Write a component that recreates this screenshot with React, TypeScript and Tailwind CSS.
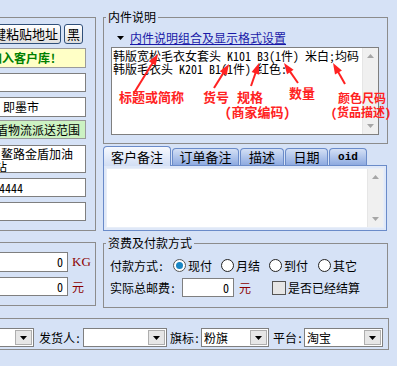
import React from "react";

const Tri = ({ color = "#000", up = false, w = 7, h = 4 }: { color?: string; up?: boolean; w?: number; h?: number }) => (
  <svg width={w} height={h} viewBox={`0 0 ${w} ${h}`} className="block">
    <polygon points={up ? `0,${h} ${w},${h} ${w / 2},0` : `0,0 ${w},0 ${w / 2},${h}`} fill={color} />
  </svg>
);

const VScroll = () => (
  <div className="w-[16px] h-full flex-none bg-[#f0f0f0] border-l border-[#e6e6e6] flex flex-col items-center justify-between py-[6px]">
    <Tri color="#a6a6a6" up />
    <Tri color="#a6a6a6" />
  </div>
);

const Combo = ({ text = "", cls }: { text?: string; cls: string }) => (
  <div className={`h-[19px] bg-white border border-[#7f7f7f] flex items-stretch ${cls}`}>
    <div className="flex-1 pl-[2px] leading-[17px] overflow-hidden whitespace-nowrap">{text}</div>
    <div className="w-[17px] m-[1px] bg-[#e6e6e6] border border-[#aeaeae] flex items-center justify-center">
      <Tri />
    </div>
  </div>
);

const Radio = ({ on = false }: { on?: boolean }) =>
  on ? (
    <div className="w-[13px] h-[13px] rounded-full border border-[#555] bg-white flex items-center justify-center">
      <div className="w-[7px] h-[7px] rounded-full bg-[#1a86c4]" />
    </div>
  ) : (
    <div className="w-[13px] h-[13px] rounded-full border border-[#222] bg-white" />
  );

const arrows: [number, number, number, number][] = [
  [22, 45, 46, 6],
  [102, 40, 117, 16],
  [139, 38, 147, 15],
  [186, 35, 172, 15],
  [233, 36, 221, 15],
];

const Arrow = ({ a }: { a: [number, number, number, number] }) => {
  const [x1, y1, x2, y2] = a;
  const dx = x2 - x1;
  const dy = y2 - y1;
  const L = Math.hypot(dx, dy);
  const ux = dx / L;
  const uy = dy / L;
  const bx = x2 - ux * 11;
  const by = y2 - uy * 11;
  const nx = -uy;
  const ny = ux;
  return (
    <g>
      <line x1={x1} y1={y1} x2={bx + ux * 2} y2={by + uy * 2} stroke="#f22" strokeWidth={2} />
      <polygon points={`${x2},${y2} ${bx + nx * 4},${by + ny * 4} ${bx - nx * 4},${by - ny * 4}`} fill="#f22" />
    </g>
  );
};

export default function App() {
  return (
    <div className="w-[397px] h-[366px] overflow-hidden bg-[#d6e2f6] text-[12px] leading-[14px] text-black [font-family:'Noto_Sans_Mono_CJK_SC','Noto_Sans_CJK_SC',sans-serif] flex flex-col">
      <div className="flex h-[308px] flex-none">
        {/* Left column */}
        <div className="w-[96px] flex-none flex flex-col pt-[17px]">
          <div className="h-[214px] border-t border-r border-b border-[#8c8c8c] pt-[6px]">
            <div className="ml-[-30px] w-[116px] flex flex-col">
              <div className="h-[20px] flex gap-[3px] pr-[3px]">
                <div className="flex-1 rounded-[3px] border border-[#30507a] bg-linear-to-b from-white to-[#e0e0e0] text-[13px] leading-[18px] text-right pr-[2px] whitespace-nowrap overflow-hidden">
                  一键粘贴地址
                </div>
                <div className="w-[19px] rounded-[3px] border border-[#30507a] bg-linear-to-b from-white to-[#e0e0e0] text-[13px] leading-[18px] text-center">
                  黑
                </div>
              </div>
              <div className="mt-[4px] h-[20px] bg-[#ffffc6] border border-[#9a9a9a] pl-[19px] leading-[18px] text-[#008000] font-bold whitespace-nowrap">
                加入客户库!
              </div>
              <div className="mt-[5px] h-[19px] bg-white border border-[#7f7f7f]" />
              <div className="mt-[5px] h-[20px] bg-white border border-[#7f7f7f] pl-[32px] leading-[18px]">即墨市</div>
              <div className="mt-[3px] h-[19px] bg-[#ccf2c2] border border-[#9a9a9a] pl-[13px] leading-[17px] whitespace-nowrap overflow-hidden">
                金盾物流派送范围
              </div>
              <div className="mt-[6px] h-[28px] bg-white border border-[#7f7f7f] leading-[13px] pt-[1px] overflow-hidden">
                <div className="pl-[30px] whitespace-nowrap">鳌路金盾加油</div>
                <div className="pl-[24px]">站</div>
              </div>
              <div className="mt-[5px] h-[19px] bg-white border border-[#7f7f7f] pl-[28px] leading-[17px]">4444</div>
              <div className="mt-[5px] h-[19px] bg-white border border-[#7f7f7f]" />
            </div>
          </div>
          <div className="mt-[11px] h-[64px] border-t border-r border-b border-[#8c8c8c] pt-[9px]">
            <div className="flex items-center h-[20px]">
              <div className="ml-[-30px] w-[98px] h-[20px] bg-white border border-[#7f7f7f] text-right pr-[4px] leading-[18px]">0</div>
              <span className="ml-[4px] text-[#8b0000] [font-family:'Liberation_Serif',serif] text-[13px]">KG</span>
            </div>
            <div className="flex items-center h-[19px] mt-[5px]">
              <div className="ml-[-30px] w-[98px] h-[19px] bg-white border border-[#7f7f7f] text-right pr-[4px] leading-[17px]">0</div>
              <span className="ml-[4px] text-[#8b0000]">元</span>
            </div>
          </div>
        </div>

        {/* Right column */}
        <div className="ml-[7px] w-[285px] flex-none flex flex-col pt-[10px]">
          <fieldset className="h-[134px] border border-[#8c8c8c] flex-none">
            <legend className="ml-[2px] px-[2px] leading-[14px]">内件说明</legend>
            <div className="mt-[6px] h-[15px] flex items-center pl-[13px]">
              <Tri w={7} h={4} />
              <span className="ml-[6px] text-[#1a1aa8] underline leading-[15px]">内件说明组合及显示格式设置</span>
            </div>
            <div className="relative mt-[2px] ml-[7px] w-[268px] h-[88px] bg-white border border-[#7f7f7f] flex">
              <div className="flex-1 pl-[1px] pt-[1px] leading-[13px] whitespace-nowrap overflow-hidden">
                <div>韩版宽松毛衣女套头 K101 B3(1件) 米白;均码</div>
                <div>韩版毛衣头 K201 B1(1件) 红色:</div>
              </div>
              <VScroll />
              <div className="absolute left-0 top-0 w-[268px] h-[88px] pointer-events-none">
                <svg width="280" height="90" className="absolute left-0 top-0 overflow-visible">
                  {arrows.map((a, i) => (
                    <Arrow key={i} a={a} />
                  ))}
                </svg>
                <div className="absolute left-[7px] top-[41px] text-[13px] leading-[15px] font-bold text-[#f22] whitespace-nowrap">标题或简称</div>
                <div className="absolute left-[91px] top-[41px] text-[13px] leading-[15px] font-bold text-[#f22]">货号</div>
                <div className="absolute left-[125px] top-[41px] text-[13px] leading-[15px] font-bold text-[#f22]">规格</div>
                <div className="absolute left-[113px] top-[56px] text-[13px] leading-[15px] font-bold text-[#f22] whitespace-nowrap">(商家编码)</div>
                <div className="absolute left-[177px] top-[37px] text-[13px] leading-[15px] font-bold text-[#f22]">数量</div>
                <div className="absolute left-[226px] top-[42px] text-[12px] leading-[15px] font-bold text-[#f22] whitespace-nowrap">颜色尺码</div>
                <div className="absolute left-[219px] top-[56px] text-[12px] leading-[15px] font-bold text-[#f22] whitespace-nowrap">(货品描述)</div>
              </div>
            </div>
          </fieldset>

          <div className="mt-[2px] h-[19px] flex items-end gap-[1px] relative z-10">
            <div className="w-[68px] h-[20px] -mb-[1px] rounded-t-[4px] border border-b-0 border-[#6a8bc9] bg-linear-to-b from-[#f6f9fe] to-[#d2def4] text-center leading-[19px] text-[13px]">客户备注</div>
            <div className="w-[67px] h-[17px] rounded-t-[4px] border border-b-0 border-[#6a8bc9] bg-linear-to-b from-[#d4e0f5] to-[#8eaae0] text-center leading-[16px] text-[13px]">订单备注</div>
            <div className="w-[44px] h-[17px] rounded-t-[4px] border border-b-0 border-[#6a8bc9] bg-linear-to-b from-[#d4e0f5] to-[#8eaae0] text-center leading-[16px] text-[13px]">描述</div>
            <div className="w-[43px] h-[17px] rounded-t-[4px] border border-b-0 border-[#6a8bc9] bg-linear-to-b from-[#d4e0f5] to-[#8eaae0] text-center leading-[16px] text-[13px]">日期</div>
            <div className="w-[38px] h-[17px] rounded-t-[4px] border border-b-0 border-[#6a8bc9] bg-linear-to-b from-[#d4e0f5] to-[#8eaae0] text-center leading-[16px] [font-family:'Liberation_Mono',monospace] font-bold text-[11px]">oid</div>
          </div>
          <div className="w-[284px] h-[66px] border border-[#6a8bc9] bg-[#dfe8f8] p-[2px] flex-none">
            <div className="w-full h-full bg-white flex justify-end border border-[#e8eef8]">
              <VScroll />
            </div>
          </div>

          <fieldset className="mt-[5px] h-[72px] border border-[#8c8c8c] flex-none">
            <legend className="ml-[2px] px-[2px] leading-[14px]">资费及付款方式</legend>
            <div className="mt-[6px] h-[19px] flex items-center pl-[6px] whitespace-nowrap">
              <span>付款方式:</span>
              <span className="ml-[9px]"><Radio on /></span>
              <span className="ml-[2px]">现付</span>
              <span className="ml-[9px]"><Radio /></span>
              <span className="ml-[2px]">月结</span>
              <span className="ml-[9px]"><Radio /></span>
              <span className="ml-[2px]">到付</span>
              <span className="ml-[10px]"><Radio /></span>
              <span className="ml-[2px]">其它</span>
            </div>
            <div className="mt-[3px] h-[19px] flex items-center pl-[6px] whitespace-nowrap">
              <span>实际总邮费:</span>
              <div className="ml-[6px] w-[52px] h-[19px] bg-white border border-[#7f7f7f] text-right pr-[4px] leading-[17px]">0</div>
              <span className="ml-[5px] text-[#8b0000]">元</span>
              <div className="ml-[21px] w-[14px] h-[14px] bg-[#e6e6e6] border border-[#555]" />
              <span className="ml-[2px]">是否已经结算</span>
            </div>
          </fieldset>
        </div>
      </div>

      {/* Bottom panel */}
      <div className="mt-[10px] w-[389px] h-[32px] border-t border-r border-b border-[#8c8c8c] pt-[9px] flex-none">
        <div className="h-[19px] flex items-center whitespace-nowrap">
          <Combo cls="ml-[-40px] w-[74px]" />
          <span className="ml-[5px]">发货人:</span>
          <Combo cls="ml-[2px] w-[84px]" />
          <span className="ml-[3px]">旗标:</span>
          <Combo cls="ml-[1px] w-[68px]" text="粉旗" />
          <span className="ml-[4px]">平台:</span>
          <Combo cls="ml-[1px] w-[79px]" text="淘宝" />
        </div>
      </div>
    </div>
  );
}
